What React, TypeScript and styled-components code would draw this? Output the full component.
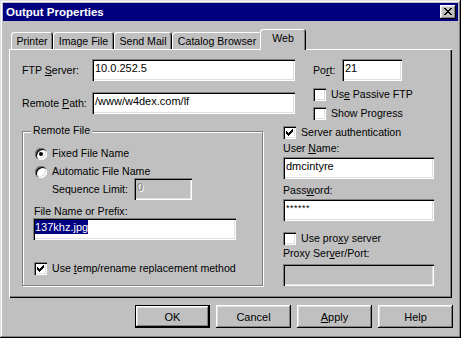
import React from 'react';
import styled, { createGlobalStyle } from 'styled-components';

const GlobalStyle = createGlobalStyle`
    html, body {
        margin: 0;
        padding: 0;
        background: #c0c0c0;
    }
    body {
        font-family: "Liberation Sans", Arial, sans-serif;
        font-size: 10.6px;
        color: #000;
    }
    * {
        box-sizing: border-box;
    }
`;

const Window = styled.div`
    width: 461px;
    height: 338px;
    padding: 3px;
    background: #c0c0c0;
    display: flex;
    flex-direction: column;
    box-shadow: inset -1px -1px 0 #000, inset 1px 1px 0 #dfdfdf,
        inset -2px -2px 0 #808080, inset 2px 2px 0 #fff;
`;

const TitleBar = styled.div`
    height: 18px;
    display: flex;
    align-items: center;
    justify-content: space-between;
    padding: 0 2px 0 3px;
    background: #000080;
    color: #fff;
    font-weight: bold;
    font-size: 11.5px;
`;

const CloseButton = styled.div`
    width: 16px;
    height: 14px;
    display: flex;
    align-items: center;
    justify-content: center;
    background: #c0c0c0;
    box-shadow: inset -1px -1px 0 #000, inset 1px 1px 0 #fff,
        inset -2px -2px 0 #808080, inset 2px 2px 0 #dfdfdf;
    padding-bottom: 1px;
`;

const Body = styled.div`
    flex: 1;
    display: flex;
    flex-direction: column;
    padding: 8px 6px 0 6px;
`;

const TabStrip = styled.div`
    height: 20px;
    display: flex;
    align-items: flex-end;
    padding-left: 2px;
    position: relative;
    z-index: 1;
`;

const Tab = styled.div<{ $active?: boolean; $w: number }>`
    width: ${p => p.$w}px;
    height: ${p => (p.$active ? 21 : 17)}px;
    margin: ${p => (p.$active ? '0 -2px -1px -2px' : '0')};
    padding: ${p => (p.$active ? '0 0 3px 0' : '1px 0 0 0')};
    position: relative;
    z-index: ${p => (p.$active ? 2 : 1)};
    display: flex;
    align-items: center;
    justify-content: center;
    background: #c0c0c0;
    border-radius: 3px 3px 0 0;
    box-shadow: inset 1px 1px 0 #fff, inset -1px 0 0 #000, inset -2px 0 0 #808080;
`;

const Panel = styled.div`
    height: 249px;
    padding: 10px 0 0 13px;
    box-shadow: inset 1px 1px 0 #fff, inset -1px -1px 0 #000,
        inset -2px -2px 0 #808080;
`;

const TopRow = styled.div`
    display: flex;
`;

const LeftFields = styled.div`
    width: 273px;
    display: flex;
    flex-direction: column;
    gap: 11px;
`;

const FieldRow = styled.div`
    display: flex;
    align-items: center;
`;

const FieldLabel = styled.span<{ $w: number }>`
    width: ${p => p.$w}px;
    line-height: 13px;
    white-space: nowrap;
`;

const TextBox = styled.div<{ $w: number; $disabled?: boolean; $ml?: number }>`
    width: ${p => p.$w}px;
    height: 22px;
    margin-left: ${p => p.$ml ?? 0}px;
    padding: 2px 2px 0 3px;
    font-size: 11px;
    line-height: 14px;
    white-space: nowrap;
    overflow: hidden;
    background: ${p => (p.$disabled ? '#c0c0c0' : '#fff')};
    color: ${p => (p.$disabled ? '#808080' : '#000')};
    text-shadow: ${p => (p.$disabled ? '1px 1px 0 #fff' : 'none')};
    box-shadow: inset 1px 1px 0 #808080, inset 2px 2px 0 #000,
        inset -1px -1px 0 #fff, inset -2px -2px 0 #dfdfdf;
`;

const Selected = styled.span`
    background: #000080;
    color: #fff;
    display: inline-block;
    margin-left: -1px;
`;

const Stars = styled.span`
    font-size: 9px;
    letter-spacing: 0.5px;
    vertical-align: top;
`;

const RightTop = styled.div`
    margin-left: 18px;
    display: flex;
    flex-direction: column;
`;

const CheckRow = styled.div<{ $mt?: number; $ml?: number }>`
    height: 13px;
    display: flex;
    align-items: center;
    gap: 5px;
    margin-top: ${p => p.$mt ?? 0}px;
    margin-left: ${p => p.$ml ?? 0}px;
    line-height: 13px;
    white-space: nowrap;
`;

const Box = styled.span`
    width: 13px;
    height: 13px;
    flex: none;
    display: flex;
    background: #fff;
    box-shadow: inset 1px 1px 0 #808080, inset 2px 2px 0 #000,
        inset -1px -1px 0 #fff, inset -2px -2px 0 #dfdfdf;
`;

const Radio = styled.span<{ $on?: boolean }>`
    width: 12px;
    height: 12px;
    flex: none;
    margin-left: 1px;
    border-radius: 50%;
    background: #fff;
    position: relative;
    box-shadow: inset 1px 1px 0 #808080, inset 2px 2px 0 #000,
        inset -1px -1px 0 #fff, inset -2px -2px 0 #dfdfdf;

    &::after {
        content: '';
        display: ${p => (p.$on ? 'block' : 'none')};
        position: absolute;
        left: 4px;
        top: 4px;
        width: 4px;
        height: 4px;
        border-radius: 50%;
        background: #000;
    }
`;

const BottomRow = styled.div`
    display: flex;
    margin-top: 4px;
`;

const GroupBox = styled.div`
    width: 241px;
    height: 155px;
    margin-top: 7px;
    position: relative;
    padding: 15px 0 0 11px;
    border: 1px solid #808080;
    box-shadow: inset 1px 1px 0 #fff, 1px 1px 0 #fff;
`;

const GroupLegend = styled.span`
    position: absolute;
    top: -8px;
    left: 8px;
    padding: 0 2px;
    line-height: 13px;
    background: #c0c0c0;
`;

const SeqRow = styled.div`
    display: flex;
    align-items: center;
    margin-left: 18px;
`;

const Caption = styled.div<{ $mt?: number; $mb?: number }>`
    line-height: 13px;
    margin-top: ${p => p.$mt ?? 0}px;
    margin-bottom: ${p => p.$mb ?? 0}px;
    white-space: nowrap;
`;

const RightCol = styled.div`
    width: 151px;
    margin-left: 20px;
    display: flex;
    flex-direction: column;
`;

const ButtonRow = styled.div`
    display: flex;
    justify-content: flex-end;
    gap: 6px;
    margin-top: 7px;
    margin-right: -1px;
`;

const Button = styled.div<{ $default?: boolean }>`
    width: 75px;
    height: 23px;
    display: flex;
    align-items: center;
    justify-content: center;
    background: #c0c0c0;
    font-size: 11px;
    box-shadow: ${p =>
        p.$default
            ? 'inset 0 0 0 1px #000, inset -2px -2px 0 #000, inset 2px 2px 0 #fff, inset -3px -3px 0 #808080, inset 3px 3px 0 #dfdfdf'
            : 'inset -1px -1px 0 #000, inset 1px 1px 0 #fff, inset -2px -2px 0 #808080, inset 2px 2px 0 #dfdfdf'};
`;

const CloseGlyph = () => (
    <svg width="8" height="7" viewBox="0 0 8 7" shapeRendering="crispEdges">
        <path
            fill="#000"
            d="M0 0h2v1H0zM6 0h2v1H6zM1 1h2v1H1zM5 1h2v1H5zM2 2h4v1H2zM3 3h2v1H3zM2 4h4v1H2zM1 5h2v1H1zM5 5h2v1H5zM0 6h2v1H0zM6 6h2v1H6z"
        />
    </svg>
);

const Check = () => (
    <svg width="13" height="13" viewBox="0 0 13 13" shapeRendering="crispEdges">
        <path
            fill="#000"
            d="M3 5h1v3H3zM4 6h1v3H4zM5 7h1v3H5zM6 6h1v3H6zM7 5h1v3H7zM8 4h1v3H8zM9 3h1v3H9z"
        />
    </svg>
);

const CheckBox: React.FC<{ checked?: boolean }> = ({ checked }) => (
    <Box>{checked && <Check />}</Box>
);

export default function App() {
    return (
        <>
            <GlobalStyle />
            <Window>
                <TitleBar>
                    <span>Output Properties</span>
                    <CloseButton>
                        <CloseGlyph />
                    </CloseButton>
                </TitleBar>
                <Body>
                    <TabStrip>
                        <Tab $w={42}>Printer</Tab>
                        <Tab $w={61}>Image File</Tab>
                        <Tab $w={58}>Send Mail</Tab>
                        <Tab $w={90}>Catalog Browser</Tab>
                        <Tab $w={46} $active>Web</Tab>
                    </TabStrip>
                    <Panel>
                        <TopRow>
                            <LeftFields>
                                <FieldRow>
                                    <FieldLabel $w={70}>FTP <u>S</u>erver:</FieldLabel>
                                    <TextBox $w={203}>10.0.252.5</TextBox>
                                </FieldRow>
                                <FieldRow>
                                    <FieldLabel $w={70}>Remote <u>P</u>ath:</FieldLabel>
                                    <TextBox $w={203}>/www/w4dex.com/lf</TextBox>
                                </FieldRow>
                            </LeftFields>
                            <RightTop>
                                <FieldRow>
                                    <FieldLabel $w={29}>Po<u>r</u>t:</FieldLabel>
                                    <TextBox $w={60}>21</TextBox>
                                </FieldRow>
                                <CheckRow $mt={7}>
                                    <CheckBox />
                                    <span>Us<u>e</u> Passive FTP</span>
                                </CheckRow>
                                <CheckRow $mt={6}>
                                    <CheckBox />
                                    <span>Show Progress</span>
                                </CheckRow>
                            </RightTop>
                        </TopRow>
                        <BottomRow>
                            <GroupBox>
                                <GroupLegend>Remote File</GroupLegend>
                                <CheckRow>
                                    <Radio $on />
                                    <span>Fixed File Name</span>
                                </CheckRow>
                                <CheckRow $mt={5}>
                                    <Radio />
                                    <span>Automatic File Name</span>
                                </CheckRow>
                                <SeqRow>
                                    <FieldLabel $w={82}>Sequence Limit:</FieldLabel>
                                    <TextBox $w={58} $disabled>0</TextBox>
                                </SeqRow>
                                <Caption $mt={5}>File Name or Prefix:</Caption>
                                <TextBox $w={203} $ml={-1}>
                                    <Selected>137khz.jpg</Selected>
                                </TextBox>
                                <CheckRow $mt={22}>
                                    <CheckBox checked />
                                    <span>Use <u>t</u>emp/rename replacement method</span>
                                </CheckRow>
                            </GroupBox>
                            <RightCol>
                                <CheckRow $mt={2}>
                                    <CheckBox checked />
                                    <span>Server authentication</span>
                                </CheckRow>
                                <Caption $mt={3} $mb={2}>User <u>N</u>ame:</Caption>
                                <TextBox $w={151}>dmcintyre</TextBox>
                                <Caption $mt={5} $mb={2}>Pass<u>w</u>ord:</Caption>
                                <TextBox $w={151}>
                                    <Stars>******</Stars>
                                </TextBox>
                                <CheckRow $mt={11}>
                                    <CheckBox />
                                    <span>Use pro<u>x</u>y server</span>
                                </CheckRow>
                                <Caption $mt={2} $mb={4}>Proxy Ser<u>v</u>er/Port:</Caption>
                                <TextBox $w={151} $disabled />
                            </RightCol>
                        </BottomRow>
                    </Panel>
                    <ButtonRow>
                        <Button $default>OK</Button>
                        <Button>Cancel</Button>
                        <Button><span><u>A</u>pply</span></Button>
                        <Button>Help</Button>
                    </ButtonRow>
                </Body>
            </Window>
        </>
    );
}
